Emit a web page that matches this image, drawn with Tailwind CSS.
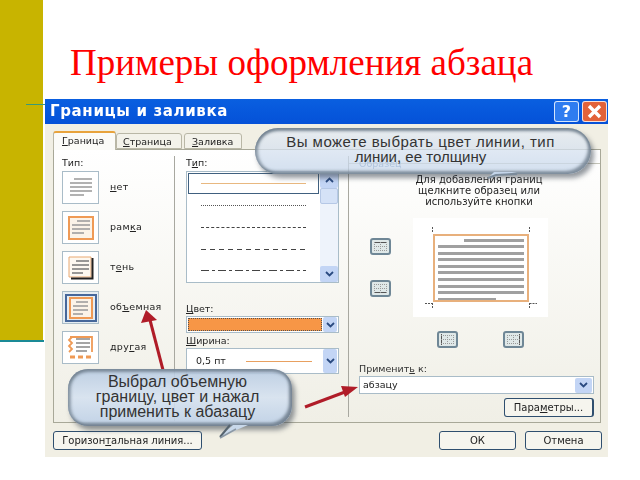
<!DOCTYPE html>
<html lang="en">
<head>
    <meta charset="UTF-8">
    <title>Примеры оформления абзаца</title>
    <script src="https://cdn.jsdelivr.net/npm/@tailwindcss/browser@4"></script>
</head>
<body class="bg-white overflow-hidden">
<div class="relative w-[640px] h-[480px] flex overflow-hidden bg-white font-['DejaVu_Sans',sans-serif] text-[9.5px] text-[#222]">
    <!-- slide side band -->
    <div class="w-[44px] shrink-0 flex flex-col">
        <div class="w-[43px] h-[340px] bg-[#c8b400]"></div>
        <div class="h-[2px] bg-[#1a8a96]"></div>
    </div>
    <div class="absolute left-[26px] top-[104px] w-[19px] h-px bg-[#3a9a78]"></div>

    <div class="flex flex-col pl-[1px]">
        <h1 class="h-[99px] pl-[25px] pt-[43px] font-['Liberation_Serif',serif] text-[37px] leading-[40px] text-[#f00] whitespace-nowrap">Примеры оформления абзаца</h1>

        <!-- dialog -->
        <div class="w-[563px] h-[358px] flex flex-col bg-[#f1efe4] blur-[0.4px]">
            <div class="h-[25px] flex items-center justify-between bg-gradient-to-b from-[#0a5fe0] to-[#0551d8] pl-[5px] pr-[1px]">
                <span class="font-bold text-[15px] tracking-[0.65px] text-white">Границы и заливка</span>
                <div class="flex gap-[3px]">
                    <div class="w-[25px] h-[21px] rounded-[3px] border border-white/80 bg-[#2f7cf0] text-white font-bold text-[16px] leading-[19px] text-center">?</div>
                    <div class="w-[25px] h-[21px] rounded-[3px] border border-white/80 bg-[#e2623a] flex items-center justify-center">
                        <svg width="15" height="15" viewBox="0 0 15 15"><path d="M2 2 L13 13 M13 2 L2 13" stroke="#fff" stroke-width="3.4"/></svg>
                    </div>
                </div>
            </div>

            <!-- tabs -->
            <div class="flex items-end h-[25px] pl-[8px] relative z-10">
                <div class="w-[63px] h-[19px] -mb-[1px] bg-[#fbfbf8] border border-b-0 border-[#b9b7a6] border-t-2 border-t-[#e8a33c] rounded-t-[3px] pl-[8px] leading-[16px]"><u>Г</u>раница</div>
                <div class="w-[66px] h-[16px] bg-[#f3f2ea] border border-[#b9b7a6] rounded-t-[3px] pl-[6px] leading-[15px]"><u>С</u>траница</div>
                <div class="w-[58px] h-[16px] ml-[2px] bg-[#f3f2ea] border border-[#b9b7a6] rounded-t-[3px] pl-[7px] leading-[15px]"><u>З</u>аливка</div>
            </div>

            <!-- panel -->
            <div class="ml-[8px] w-[548px] h-[274px] flex border border-[#a8a898] bg-gradient-to-b from-white to-[#f0efe6]">
                <!-- setting column -->
                <div class="w-[121px] h-[265px] mt-[6px] pl-[8px] border-r border-[#a8a8a0]">
                    <div class="h-[15px] leading-[14px]">Тип:</div>
                    <div class="flex flex-col gap-[7px]">
                        <div class="flex items-center gap-[11px]">
                            <div class="w-[37px] h-[33px] flex items-center justify-center bg-white border border-[#a9bcc8]">
                                <svg width="24" height="22" viewBox="0 0 24 22"><path d="M5 2H23M1 6H23M1 10H23M1 14H23M1 18H15" stroke="#999" stroke-width="1.4"/></svg>
                            </div>
                            <span class="tracking-[0.3px]"><u>н</u>ет</span>
                        </div>
                        <div class="flex items-center gap-[11px]">
                            <div class="w-[37px] h-[33px] flex items-center justify-center bg-white border border-[#a9bcc8]">
                                <svg width="26" height="24" viewBox="0 0 26 24"><rect x="1" y="1" width="24" height="22" fill="#fbf3e8" stroke="#ef9a55" stroke-width="2"/><path d="M9 5H22M4 9H22M4 13H22M4 17H16" stroke="#999" stroke-width="1.4"/></svg>
                            </div>
                            <span class="tracking-[0.3px]">рам<u>к</u>а</span>
                        </div>
                        <div class="flex items-center gap-[11px]">
                            <div class="w-[37px] h-[33px] flex items-center justify-center bg-white border border-[#a9bcc8]">
                                <svg width="26" height="24" viewBox="0 0 26 24"><path d="M1 1H23V21H1Z" fill="#fdf8f0" stroke="#e9a870"/><path d="M24.500 2V22.500H3" fill="none" stroke="#222" stroke-width="2"/><path d="M8 5H21M4 9H21M4 13H21M4 17H15" stroke="#777" stroke-width="1.4"/></svg>
                            </div>
                            <span class="tracking-[0.3px]">т<u>е</u>нь</span>
                        </div>
                        <div class="flex items-center gap-[11px]">
                            <div class="w-[37px] h-[33px] flex items-center justify-center bg-[#e6edf2] border border-[#a9bcc8]">
                                <svg width="32" height="28" viewBox="0 0 32 28"><rect x="1" y="1" width="30" height="26" fill="none" stroke="#46679a" stroke-width="2"/><rect x="5" y="4" width="22" height="20" fill="#fbf3e8" stroke="#ef9a55" stroke-width="2"/><path d="M11 8H23M8 12H23M8 16H23M8 20H18" stroke="#999" stroke-width="1.300"/></svg>
                            </div>
                            <span class="tracking-[0.3px]">об<u>ъ</u>емная</span>
                        </div>
                        <div class="flex items-center gap-[11px]">
                            <div class="w-[37px] h-[33px] flex items-center justify-center bg-white border border-[#a9bcc8]">
                                <svg width="28" height="26" viewBox="0 0 28 26"><path d="M3 2H25V17M5 2L2 5L5 8L2 11L5 14L2 17" fill="none" stroke="#ef9a55" stroke-width="1.800"/><path d="M9 4H23M9 8H23M9 12H23M9 16H20" stroke="#888" stroke-width="1.300"/><path d="M3 22H8M11 22H16M19 22H24" stroke="#ef9a55" stroke-width="3"/></svg>
                            </div>
                            <span class="font-medium tracking-[0.3px]">дру<u>г</u>ая</span>
                        </div>
                    </div>
                </div>

                <!-- line style column -->
                <div class="w-[174px] h-[261px] mt-[6px] pl-[11px] border-r border-[#a8a8a0]">
                    <div class="h-[15px] leading-[14px]">Т<u>и</u>п:</div>
                    <div class="w-[153px] h-[112px] flex bg-white border border-[#a9bcc8]">
                        <div class="flex-1 flex flex-col p-[1px]">
                            <div class="h-[21px] flex items-center px-[12px] border border-[#40607f]"><div class="w-full h-[1.5px] bg-[#e8b880]"></div></div>
                            <div class="h-[22px] flex items-center px-[13px]"><div class="w-full border-t border-dotted border-[#555]"></div></div>
                            <div class="h-[22px] flex items-center px-[13px]"><div class="w-full border-t border-dashed border-[#444]"></div></div>
                            <div class="h-[22px] flex items-center px-[13px]"><div class="w-full h-px bg-[repeating-linear-gradient(90deg,#444_0_5px,transparent_5px_9px)]"></div></div>
                            <div class="h-[20px] flex items-center px-[13px]"><div class="w-full h-px bg-[repeating-linear-gradient(90deg,#444_0_8px,transparent_8px_11px,#444_11px_14px,transparent_14px_17px)]"></div></div>
                        </div>
                        <div class="w-[18px] flex flex-col justify-between bg-[#eef3fb]">
                            <div class="h-[16px] flex items-center justify-center bg-[#c3d5f5] rounded-[2px]"><svg width="9" height="6" viewBox="0 0 9 6"><path d="M1 5L4.500 1.500L8 5" fill="none" stroke="#2a4a80" stroke-width="1.800"/></svg></div>
                            <div class="h-[16px] mb-auto bg-[#d5e2f7] border border-[#b6c8e6] rounded-[2px]"></div>
                            <div class="h-[16px] flex items-center justify-center bg-[#c3d5f5] rounded-[2px]"><svg width="9" height="6" viewBox="0 0 9 6"><path d="M1 1L4.500 4.500L8 1" fill="none" stroke="#2a4a80" stroke-width="1.800"/></svg></div>
                        </div>
                    </div>
                    <div class="h-[14px] mt-[19px] leading-[14px]"><u>Ц</u>вет:</div>
                    <div class="w-[153px] h-[17px] flex items-center bg-white border border-[#a9bcc8] pl-[1px] pr-[1px]">
                        <div class="flex-1 h-[13px] bg-[#f79646] border border-dotted border-[#555]"></div>
                        <div class="w-[14px] h-[15px] ml-[1px] flex items-center justify-center bg-[#c3d5f5] rounded-[2px]"><svg width="9" height="6" viewBox="0 0 9 6"><path d="M1 1L4.500 4.500L8 1" fill="none" stroke="#2a4a80" stroke-width="1.800"/></svg></div>
                    </div>
                    <div class="h-[15px] leading-[15px]"><u>Ш</u>ирина:</div>
                    <div class="w-[153px] h-[26px] flex items-center bg-white border border-[#a9bcc8] pl-[9px] pr-[1px]">
                        <span class="w-[50px]">0,5 пт</span>
                        <div class="w-[66px] h-px bg-[#e8a060]"></div>
                        <div class="w-[14px] h-[24px] ml-auto flex items-center justify-center bg-[#c3d5f5] rounded-[2px]"><svg width="9" height="6" viewBox="0 0 9 6"><path d="M1 1L4.500 4.500L8 1" fill="none" stroke="#2a4a80" stroke-width="1.800"/></svg></div>
                    </div>
                </div>

                <!-- preview column -->
                <div class="flex-1 mt-[13px] border-t border-[#c4c4b8] flex flex-col">
                    <div class="h-[9px] pl-[10px] -mt-[6px] text-[#5f82b0] leading-[12px]">Образец</div>
                    <div class="mt-[7px] ml-[10px] text-center text-[10px] leading-[11px] w-[240px]">
                        <div>Для добавления границ</div>
                        <div>щелкните образец или</div>
                        <div>используйте кнопки</div>
                    </div>
                    <div class="mt-[11px] flex">
                        <div class="w-[64px] flex flex-col pl-[21px] pt-[20px] gap-[25px]">
                            <div class="w-[21px] h-[17px] bg-[#dfe8e8] border-2 border-[#6f8796] rounded-[3px]">
                                <svg width="17" height="13" viewBox="0 0 17 13"><path d="M2 2.500H15" stroke="#555"/><path d="M2 6.500H15M2 10.500H15M2.500 2V11M8.500 2V11M14.500 2V11" stroke="#999" stroke-dasharray="1 1"/></svg>
                            </div>
                            <div class="w-[21px] h-[17px] bg-[#dfe8e8] border-2 border-[#6f8796] rounded-[3px]">
                                <svg width="17" height="13" viewBox="0 0 17 13"><path d="M2 10.500H15" stroke="#555"/><path d="M2 2.500H15M2 6.500H15M2.500 2V11M8.500 2V11M14.500 2V11" stroke="#999" stroke-dasharray="1 1"/></svg>
                            </div>
                        </div>
                        <div class="relative w-[135px] h-[99px] flex items-center justify-center bg-white">
                            <div class="w-[96px] h-[68px] flex flex-col gap-[3.6px] px-[3px] pt-[3px] border-2 border-[#e8b07c] overflow-hidden">
                                <div class="w-[60px] h-[3px] shrink-0 ml-auto bg-[#a0a0a0]"></div>
                                <div class="h-[3px] shrink-0 bg-[#a0a0a0]"></div>
                                <div class="h-[3px] shrink-0 bg-[#a0a0a0]"></div>
                                <div class="h-[3px] shrink-0 bg-[#a0a0a0]"></div>
                                <div class="h-[3px] shrink-0 bg-[#a0a0a0]"></div>
                                <div class="h-[3px] shrink-0 bg-[#a0a0a0]"></div>
                                <div class="h-[3px] shrink-0 bg-[#a0a0a0]"></div>
                                <div class="h-[3px] shrink-0 bg-[#a0a0a0]"></div>
                                <div class="h-[3px] shrink-0 bg-[#a0a0a0]"></div>
                                <div class="h-[3px] shrink-0 w-[58px] bg-[#a0a0a0]"></div>
                            </div>
                            <!-- crop marks -->
                            <svg class="absolute left-0 top-0" width="135" height="99" viewBox="0 0 135 99"><path d="M19.500 9V15M116.500 9V15M19.500 85V91M12 85.500H19.500M116.500 85V91M116.500 85.500H124" fill="none" stroke="#555" stroke-dasharray="2 1"/></svg>
                        </div>
                    </div>
                    <div class="mt-[14px] flex pl-[88px] gap-[45px]">
                        <div class="w-[21px] h-[17px] bg-[#dfe8e8] border-2 border-[#6f8796] rounded-[3px]">
                            <svg width="17" height="13" viewBox="0 0 17 13"><path d="M2.500 1V12" stroke="#555"/><path d="M2 2.500H15M2 6.500H15M2 10.500H15M8.500 2V11M14.500 2V11" stroke="#999" stroke-dasharray="1 1"/></svg>
                        </div>
                        <div class="w-[21px] h-[17px] bg-[#dfe8e8] border-2 border-[#6f8796] rounded-[3px]">
                            <svg width="17" height="13" viewBox="0 0 17 13"><path d="M14.500 1V12" stroke="#555"/><path d="M2 2.500H15M2 6.500H15M2 10.500H15M8.500 2V11M2.500 2V11" stroke="#999" stroke-dasharray="1 1"/></svg>
                        </div>
                    </div>
                    <div class="h-[14px] mt-[14px] pl-[10px] leading-[14px] text-[#333]">Применит<u>ь</u> к:</div>
                    <div class="ml-[10px] w-[235px] h-[18px] flex items-center justify-between bg-white border border-[#a9bcc8] pl-[3px] pr-[1px]">
                        <span>абзацу</span>
                        <div class="w-[17px] h-[15px] flex items-center justify-center bg-[#c3d5f5] rounded-[2px]"><svg width="9" height="6" viewBox="0 0 9 6"><path d="M1 1L4.500 4.500L8 1" fill="none" stroke="#2a4a80" stroke-width="1.800"/></svg></div>
                    </div>
                    <div class="mt-[4px] ml-[155px] w-[90px] h-[19px] bg-[#f6f5ee] border border-[#2f4f6f] border-r-2 rounded-[3px] text-center text-[10px] leading-[17px]">Пара<u>м</u>етры...</div>
                </div>
            </div>

            <!-- bottom buttons -->
            <div class="mt-[8px] pl-[8px] flex text-[10px]">
                <div class="w-[149px] h-[19px] bg-[#f6f5ee] border border-[#2f4f6f] rounded-[3px] text-center leading-[17px]">Горизон<u>т</u>альная линия...</div>
                <div class="ml-[237px] w-[77px] h-[19px] bg-[#f6f5ee] border border-[#2f4f6f] rounded-[3px] text-center leading-[17px]">ОК</div>
                <div class="ml-[9px] w-[77px] h-[19px] bg-[#f6f5ee] border border-[#2f4f6f] rounded-[3px] text-center leading-[17px]">Отмена</div>
            </div>
        </div>
    </div>

    <!-- arrows -->
    <svg class="absolute left-0 top-0" width="640" height="480" viewBox="0 0 640 480">
        <path d="M163 370L150 320" stroke="#b01c28" stroke-width="3"/>
        <path d="M146 310L157 320L141 323Z" fill="#b01c28"/>
        <path d="M305 407L345 392" stroke="#b01c28" stroke-width="3"/>
        <path d="M358 387L345 397L341 386Z" fill="#b01c28"/>
    </svg>

    <!-- callout: top -->
    <div class="absolute left-[255px] top-[128px] w-[336px] h-[46px] flex flex-col items-center justify-center pr-[5px] pb-[4px] rounded-[23px] bg-gradient-to-b from-[#e6ecf4]/75 to-[#c4d5ea]/75 shadow-[inset_0_3px_3px_rgba(110,125,140,0.9),inset_-3px_-3px_3px_rgba(110,125,140,0.8),inset_3px_0_3px_rgba(120,135,150,0.7),3px_4px_5px_rgba(60,70,80,0.55)] font-['Liberation_Sans',sans-serif] text-[15px] leading-[15px] text-[#333]">
        <div class="tracking-[0.5px]">Вы можете выбрать цвет линии, тип</div>
        <div>линии, ее толщину</div>
    </div>
    <svg class="absolute left-[484px] top-[170px]" width="40" height="14" viewBox="0 0 40 14"><path d="M4 8L10 2L33 2Z" fill="#c4d5ea"/><path d="M4 8L12 5L33 4" fill="none" stroke="#7b8b9b" stroke-width="2"/></svg>

    <!-- callout: bottom -->
    <div class="absolute left-[68px] top-[369px] w-[224px] h-[57px] flex flex-col items-center justify-center pr-[5px] pb-[2px] rounded-[20px] bg-gradient-to-b from-[#b8cbe2]/90 via-[#d6e2f0]/90 to-[#bccfe6]/90 shadow-[inset_0_3px_3px_rgba(110,125,140,0.8),inset_-3px_-3px_3px_rgba(100,115,130,0.8),inset_3px_0_3px_rgba(120,135,150,0.7),3px_4px_5px_rgba(60,70,80,0.55)] font-['Liberation_Sans',sans-serif] text-[16px] leading-[15px] text-[#333]">
        <div>Выбрал объемную</div>
        <div>границу, цвет и нажал</div>
        <div>применить к абазацу</div>
    </div>
    <svg class="absolute left-[216px] top-[421px]" width="34" height="18" viewBox="0 0 34 18"><path d="M4 16L17 4L32 4Z" fill="#c8d8ea"/><path d="M4 16L14 4" stroke="#56646f" stroke-width="2"/><path d="M4 17L20 8" stroke="#8b98a5" stroke-width="1.500"/></svg>
</div>
</body>
</html>
